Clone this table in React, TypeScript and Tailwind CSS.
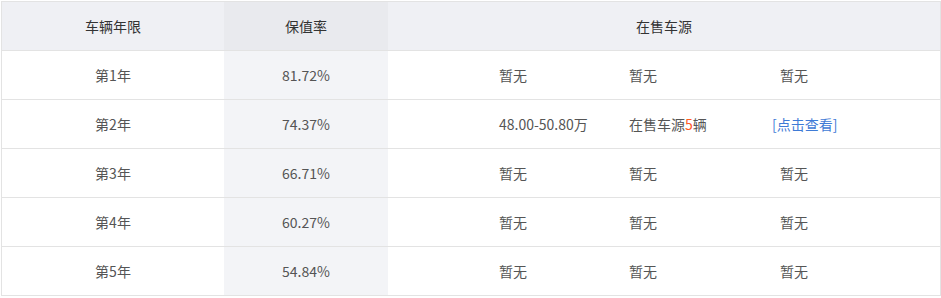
const font = { fontFamily: '"Microsoft YaHei", "Noto Sans CJK SC", "Noto Sans", sans-serif' };

const rows = [
  { year: "第1年", rate: "81.72%", price: null },
  { year: "第2年", rate: "74.37%", price: "48.00-50.80万" },
  { year: "第3年", rate: "66.71%", price: null },
  { year: "第4年", rate: "60.27%", price: null },
  { year: "第5年", rate: "54.84%", price: null },
];

export default function App() {
  return (
    <div className="bg-white w-[941px] h-[298px] pl-px pt-px" style={font}>
      <div className="w-[940px] border border-[#e3e3e3] text-[14px]">
        <div className="flex h-[48px] bg-[#eff0f4] text-[#333]">
          <div className="w-[222px] flex items-center justify-center">车辆年限</div>
          <div className="w-[164px] flex items-center justify-center bg-[#e9eaee]">保值率</div>
          <div className="flex-1 flex items-center justify-center">在售车源</div>
        </div>
        {rows.map((r) => (
          <div key={r.year} className="flex h-[49px] border-t border-[#e3e3e3] text-[#555]">
            <div className="w-[222px] flex items-center justify-center">{r.year}</div>
            <div className="w-[164px] flex items-center justify-center bg-[#f3f4f7]">{r.rate}</div>
            <div className="flex-1 flex items-center pl-[111px]">
              {r.price ? (
                <>
                  <span className="w-[130px]">{r.price}</span>
                  <span className="w-[143px]">
                    在售车源<span className="text-[#ff5a1f]">5</span>辆
                  </span>
                  <a className="text-[#3f7bd6] cursor-pointer">[点击查看]</a>
                </>
              ) : (
                <>
                  <span className="w-[130px]">暂无</span>
                  <span className="w-[143px]">暂无</span>
                  <span className="pl-2">暂无</span>
                </>
              )}
            </div>
          </div>
        ))}
      </div>
    </div>
  );
}
